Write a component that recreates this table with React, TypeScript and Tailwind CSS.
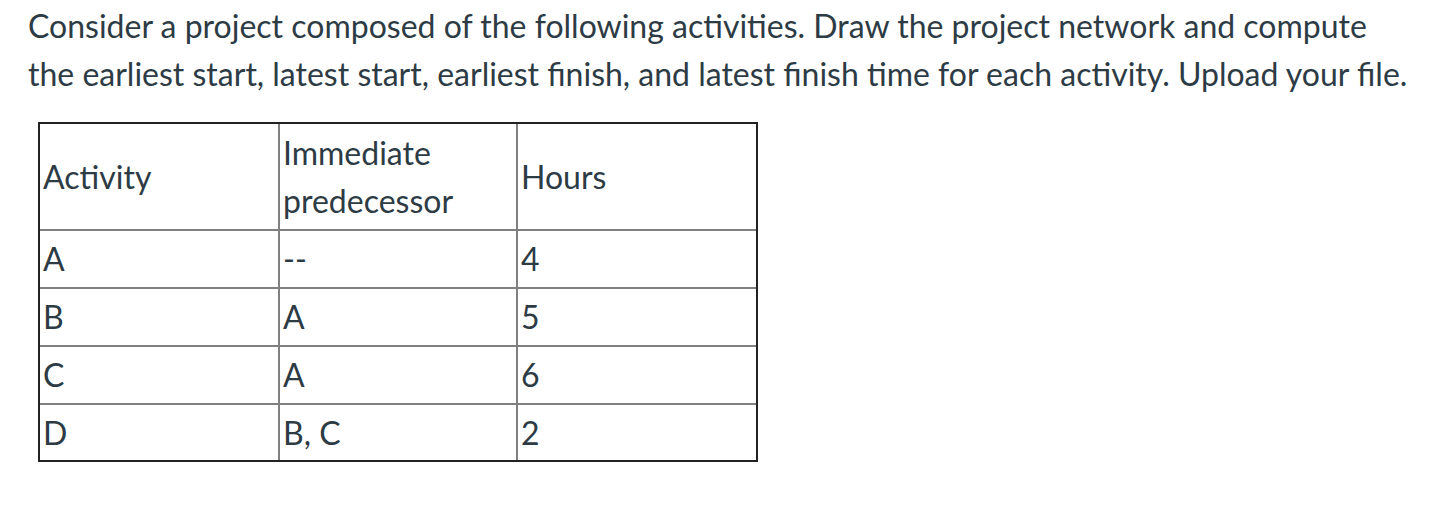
import React from "react";

const rows: [string, string, string][] = [
  ["A", "--", "4"],
  ["B", "A", "5"],
  ["C", "A", "6"],
  ["D", "B, C", "2"],
];

export default function App() {
  return (
    <div
      className="bg-white w-[1448px] h-[522px] text-[#2d3b45] text-[32px] leading-[48px] pl-[28px] pt-[2px]"
      style={{ fontFamily: "Lato, 'Open Sans', sans-serif" }}
    >
      <p>
        Consider a project composed of the following activities. Draw the project network and compute
        <br />
        the earliest start, latest start, earliest finish, and latest finish time for each activity. Upload your file.
      </p>
      <div className="mt-[24px] ml-[10px] w-[720px] border-2 border-[#222222]">
        <table className="w-full border-collapse table-fixed">
          <colgroup>
            <col className="w-[239px]" />
            <col className="w-[238px]" />
            <col />
          </colgroup>
          <tbody>
            <tr className="h-[106px]">
              <td className="border-r-2 border-b-2 border-[#808080] px-[3px] align-middle">Activity</td>
              <td className="border-r-2 border-b-2 border-[#808080] px-[3px] align-middle">
                Immediate
                <br />
                predecessor
              </td>
              <td className="border-b-2 border-[#808080] px-[3px] align-middle">Hours</td>
            </tr>
            {rows.map((r, i) => (
              <tr key={r[0]} className={i < rows.length - 1 ? "h-[58px]" : "h-[56px]"}>
                {r.map((c, j) => (
                  <td
                    key={j}
                    className={
                      "border-[#808080] px-[3px] align-middle " +
                      (j < 2 ? "border-r-2 " : "") +
                      (i < rows.length - 1 ? "border-b-2" : "")
                    }
                  >
                    {c}
                  </td>
                ))}
              </tr>
            ))}
          </tbody>
        </table>
      </div>
    </div>
  );
}
